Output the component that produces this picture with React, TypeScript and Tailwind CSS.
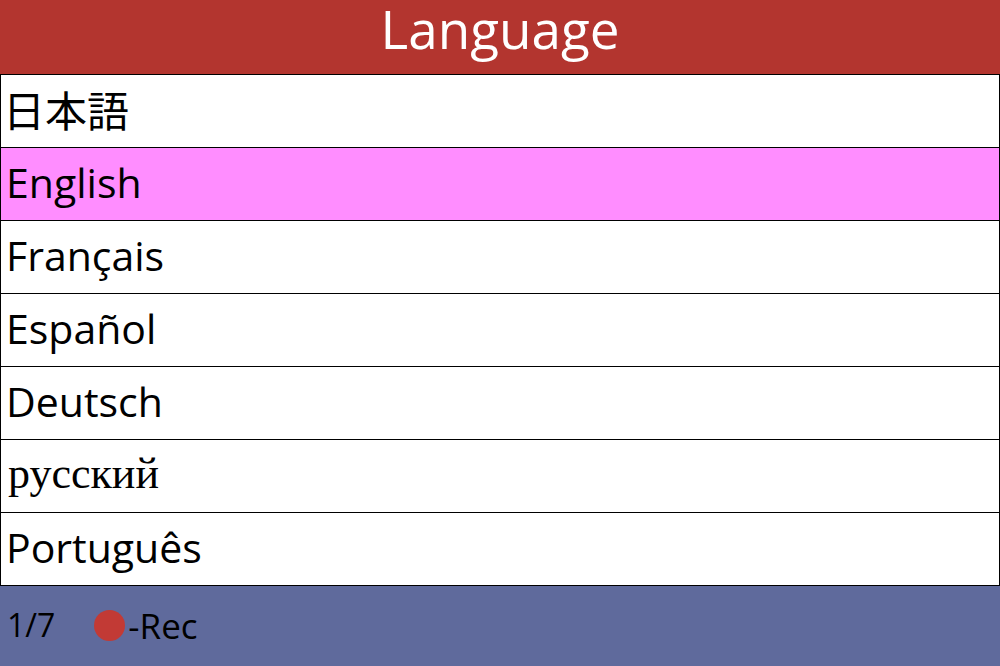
import React from "react";

const langs = ["日本語", "English", "Français", "Español", "Deutsch", "русский", "Português"];

export default function App() {
  return (
    <div className="w-[1000px] h-[666px] flex flex-col bg-white overflow-hidden" style={{ fontFamily: '"Open Sans", "Noto Sans CJK JP", sans-serif' }}>
      <div className="h-[74px] bg-[#b3352f] text-center text-white text-[53px] leading-[58px] pb-[16px]">
        Language
      </div>
      <div className="flex flex-col border-l border-r border-black">
        {langs.map((l, i) => (
          <div
            key={l}
            className={
              "h-[73px] border-t border-black flex items-center pl-[5px] pb-[4px] text-black leading-none " +
              (i === 1 ? "bg-[#ff8dff]" : "bg-white")
            }
          >
            {i === 0 ? (
              <span className="text-[42px] -ml-[3px]" style={{ fontFamily: '"Noto Sans CJK JP", sans-serif' }}>{l}</span>
            ) : i === 5 ? (
              <span className="text-[44px] ml-[2px]" style={{ fontFamily: '"Liberation Serif", serif' }}>{l}</span>
            ) : (
              <span className="text-[41px]">{l}</span>
            )}
          </div>
        ))}
      </div>
      <div className="flex-1 bg-[#5f6a9c] border-t border-black flex items-center pl-[7px] pb-[2px] text-[32px] text-black leading-none">
        <span>1/7</span>
        <span className="ml-[39px] w-[31px] h-[31px] rounded-full bg-[#c23a35]" />
        <span className="ml-[3px] text-[35px]">-Rec</span>
      </div>
    </div>
  );
}
